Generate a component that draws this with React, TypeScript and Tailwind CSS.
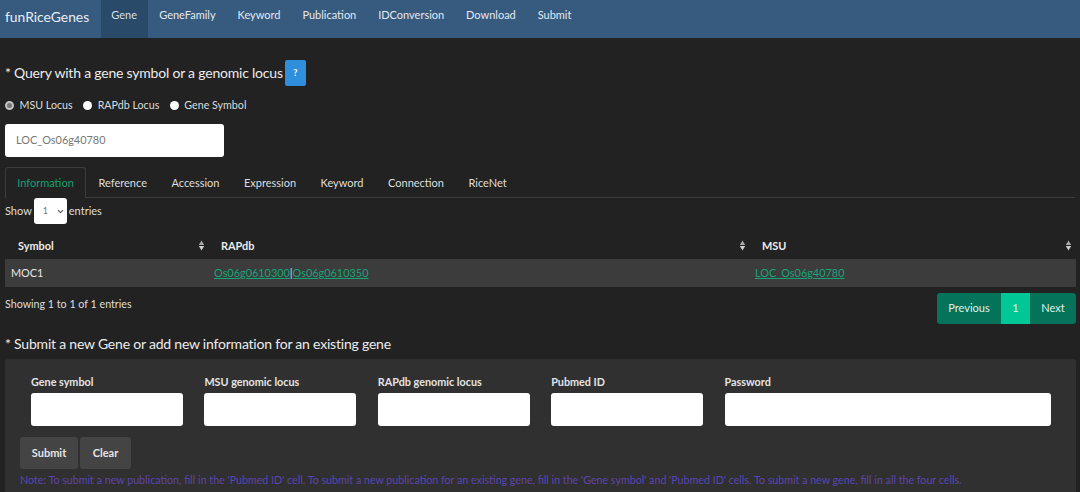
import { ChevronDown } from "lucide-react";

const navItems = ["GeneFamily", "Keyword", "Publication", "IDConversion", "Download", "Submit"];
const tabs = ["Reference", "Accession", "Expression", "Keyword", "Connection", "RiceNet"];

function SortArrows() {
  return (
    <svg width="7" height="11" viewBox="0 0 7 11" className="shrink-0">
      <path d="M3.5 0.5 L6.2 5 H0.8 Z" fill="#a9a9a9" />
      <path d="M3.5 10.5 L6.2 6 H0.8 Z" fill="#cfcfcf" />
    </svg>
  );
}

function Radio({ label, checked }: { label: string; checked?: boolean }) {
  return (
    <label className="flex items-center gap-[5.5px]">
      <span className={`h-[9px] w-[9px] rounded-full ${checked ? "border-2 border-[#c4c4c4] bg-[#777]" : "bg-white"}`} />
      <span>{label}</span>
    </label>
  );
}

function Field({ label, width }: { label: string; width: string }) {
  return (
    <div className={`flex flex-col ${width}`}>
      <label className="mb-[4px] h-[14px] text-[10.8px] leading-[14px] font-bold text-[#e4e4e4]">{label}</label>
      <input className="h-[33px] w-full rounded-[3px] bg-white outline-none" />
    </div>
  );
}

export default function App() {
  return (
    <div className="h-[492px] w-[1080px] overflow-hidden bg-[#222222] font-['Lato','Open_Sans',sans-serif] text-[#e6e6e6]">
      <nav className="flex h-[38px] items-stretch bg-[#375a7f] pl-[5px] text-[11px]">
        <span className="mr-[11.5px] self-center pb-[5px] text-[13.85px] leading-[20px] text-[#e8eef4]">funRiceGenes</span>
        <span className="flex w-[47px] items-center justify-center bg-[#2a4a69] pb-[8px] text-[#d5dfe8]">Gene</span>
        <div className="flex gap-[21.9px] pl-[11.5px]">
          {navItems.map((item) => (
            <span key={item} className="flex items-center pb-[8px] text-[#e2e9f0]">
              {item}
            </span>
          ))}
        </div>
      </nav>

      <main className="px-[5px]">
        <div className="mt-[22px] flex h-[26px] items-center gap-[2px]">
          <h2 className="text-[14px] leading-[20px] tracking-[-0.21px] text-[#ececec]">* Query with a gene symbol or a genomic locus</h2>
          <button className="flex h-[26px] w-[21px] items-center justify-center rounded-[2px] bg-[#2f8fdc] text-[9px] font-bold text-white">
            ?
          </button>
        </div>

        <div className="mt-[11px] flex h-[16px] items-center gap-[10.5px] text-[10.7px] text-[#dcdcdc]">
          <Radio label="MSU Locus" checked />
          <Radio label="RAPdb Locus" />
          <Radio label="Gene Symbol" />
        </div>

        <div className="mt-[11px] flex h-[33px] w-[219px] items-center rounded-[3px] bg-white px-[11px] text-[10.9px] text-[#777]">
          LOC_Os06g40780
        </div>

        <div className="mt-[10px] flex h-[31px] items-stretch border-b border-[#3d3d3d] text-[11px] text-[#dedede]">
          <span className="-mb-px flex w-[81px] items-center justify-center rounded-t-[3px] border border-b-0 border-[#3d3d3d] bg-[#222222] text-[#13a06f]">
            Information
          </span>
          <div className="flex gap-[24.5px] pl-[12.5px]">
            {tabs.map((tab) => (
              <span key={tab} className="flex items-center pt-[2px]">
                {tab}
              </span>
            ))}
          </div>
        </div>

        <div className="flex h-[26px] items-center gap-[2px] text-[11px] text-[#dedede]">
          <span>Show</span>
          <div className="flex h-[26px] w-[33px] items-center justify-between rounded-[3px] bg-white pr-[2px] pl-[9px] text-[9px] text-[#777]">
            1
            <ChevronDown size={9} strokeWidth={3} className="text-[#555]" />
          </div>
          <span>entries</span>
        </div>

        <table className="mt-[9px] w-[1071px] table-fixed border-collapse text-[10.9px]">
          <thead>
            <tr className="h-[26px] font-bold text-[#ececec]">
              <th className="w-[202px] pr-[2px] pl-[13px]">
                <div className="flex items-center justify-between font-bold">
                  <span>Symbol</span>
                  <SortArrows />
                </div>
              </th>
              <th className="w-[541px] pr-[2px] pl-[14px]">
                <div className="flex items-center justify-between font-bold">
                  <span>RAPdb</span>
                  <SortArrows />
                </div>
              </th>
              <th className="pr-[4px] pl-[14px]">
                <div className="flex items-center justify-between font-bold">
                  <span>MSU</span>
                  <SortArrows />
                </div>
              </th>
            </tr>
          </thead>
          <tbody>
            <tr className="h-[28px] bg-[#3c3c3c]">
              <td className="pl-[6px] text-[#e6e6e6]">MOC1</td>
              <td className="pl-[7px] text-[#dedede]">
                <a className="text-[#14a578] underline">Os06g0610300</a>|<a className="text-[#14a578] underline">Os06g0610350</a>
              </td>
              <td className="pl-[7px]">
                <a className="text-[#14a578] underline">LOC_Os06g40780</a>
              </td>
            </tr>
          </tbody>
        </table>

        <div className="mt-[6px] -mr-px flex items-start justify-between text-[11px]">
          <span className="mt-[4px] text-[10.7px] leading-[14px] text-[#dedede]">Showing 1 to 1 of 1 entries</span>
          <div className="flex h-[31px] overflow-hidden rounded-[3px] text-[#dff2ea]">
            <span className="flex w-[64px] items-center justify-center bg-[#04735a]">Previous</span>
            <span className="flex w-[29px] items-center justify-center bg-[#00c795]">1</span>
            <span className="flex w-[46px] items-center justify-center bg-[#04735a]">Next</span>
          </div>
        </div>

        <h2 className="mt-[10px] text-[14px] leading-[20px] tracking-[-0.21px] text-[#ececec]">* Submit a new Gene or add new information for an existing gene</h2>

        <section className="mt-[5px] h-[140px] w-[1071px] rounded-[3px] bg-[#303030] pt-[16px] pl-[15px]">
          <div className="flex gap-[21.4px] pl-[11px]">
            <Field label="Gene symbol" width="w-[152px]" />
            <Field label="MSU genomic locus" width="w-[152px]" />
            <Field label="RAPdb genomic locus" width="w-[152px]" />
            <Field label="Pubmed ID" width="w-[152px]" />
            <Field label="Password" width="w-[326px]" />
          </div>
          <div className="mt-[11px] flex gap-[2px] text-[11px] font-bold text-[#e4e4e4]">
            <button className="h-[32px] w-[58px] rounded-[3px] bg-[#444444] font-bold">Submit</button>
            <button className="h-[32px] w-[51px] rounded-[3px] bg-[#444444] font-bold">Clear</button>
          </div>
          <p className="mt-[4px] text-[10.68px] leading-[14px] whitespace-nowrap text-[#5b45b0]">
            Note: To submit a new publication, fill in the 'Pubmed ID' cell. To submit a new publication for an existing gene, fill in the 'Gene symbol' and 'Pubmed ID' cells. To submit a new gene, fill in all the four cells.
          </p>
        </section>
      </main>
    </div>
  );
}
